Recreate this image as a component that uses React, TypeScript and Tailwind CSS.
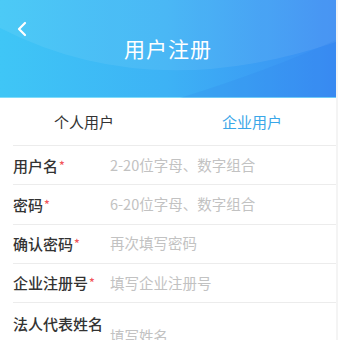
import React from 'react';

const font = { fontFamily: '"Noto Sans CJK SC", "Noto Sans", sans-serif' };

const rows = [
  { label: '用户名', required: true, hint: '2-20位字母、数字组合' },
  { label: '密码', required: true, hint: '6-20位字母、数字组合' },
  { label: '确认密码', required: true, hint: '再次填写密码' },
  { label: '企业注册号', required: true, hint: '填写企业注册号' },
];

const Label = ({ text, required }: { text: string; required?: boolean }) => (
  <div className="w-[97px] shrink-0 flex items-start text-[15px] font-medium text-[#333] leading-none">
    <span>{text}</span>
    {required && <span className="text-[#f2555a] text-[12px] leading-none ml-[1px] mt-[1px]">*</span>}
  </div>
);

export default function App() {
  return (
    <div className="w-[338px] h-[340px] overflow-hidden bg-[#f4f4f4] flex flex-col" style={font}>
      <div className="w-[336px] flex-1 flex flex-col bg-white">
        {/* header */}
        <div className="relative h-[98px] shrink-0 bg-gradient-to-r from-[#3fc6f6] via-[#3db2f5] to-[#3b8cf3] flex items-center justify-center border-b border-[#7fdcfa]">
          <svg className="absolute inset-0" width="336" height="98" viewBox="0 0 336 98">
            <path d="M0 28 Q 150 105 336 42 L336 0 L0 0 Z" fill="#ffffff" opacity="0.07" />
            <path d="M180 98 Q 270 70 336 40 L336 98 Z" fill="#2f7fe8" opacity="0.18" />
          </svg>
          <svg className="absolute left-[15px] top-[21px]" width="14" height="16" viewBox="0 0 14 16" fill="none">
            <path d="M10 2 L4 8 L10 14" stroke="#fff" strokeWidth="2.2" strokeLinecap="round" strokeLinejoin="round" />
          </svg>
          <h1 className="relative text-white text-[21px] tracking-[1px] leading-none">用户注册</h1>
        </div>

        {/* tabs */}
        <div className="h-[47px] shrink-0 flex items-center text-[15px] leading-none">
          <div className="flex-1 text-center text-[#333]">个人用户</div>
          <div className="flex-1 text-center text-[#3aa6e8]">企业用户</div>
        </div>

        {/* form */}
        <div className="ml-[13px] border-t border-[#ececec] flex-1 flex flex-col">
          {rows.map((r) => (
            <div key={r.label} className="h-[39.25px] shrink-0 border-b border-[#ececec] flex items-center">
              <Label text={r.label} required={r.required} />
              <span className="text-[14.5px] text-[#c2c2c2] leading-none">{r.hint}</span>
            </div>
          ))}
          <div className="flex-1 flex items-center">
            <Label text="法人代表姓名" />
            <span className="mt-[26px] text-[14.5px] text-[#c2c2c2] leading-none">填写姓名</span>
          </div>
        </div>
      </div>
      <div className="h-[3px] shrink-0 bg-[#3a3a3a]" />
    </div>
  );
}
